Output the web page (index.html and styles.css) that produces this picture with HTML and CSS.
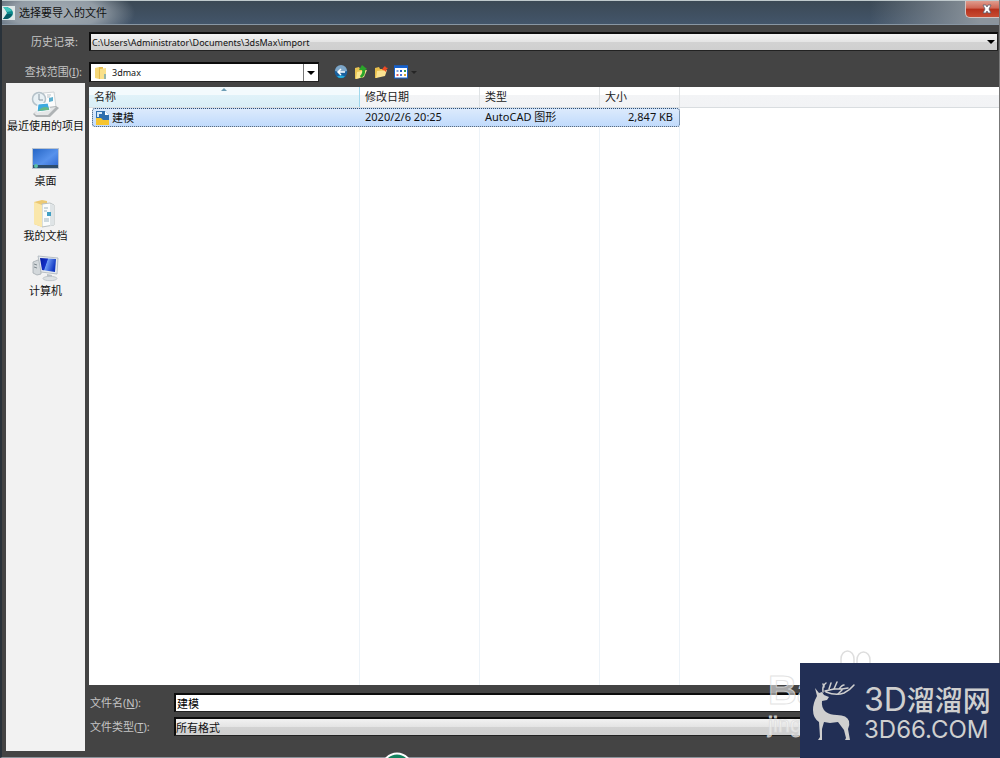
FILE: index.html
```html
<!DOCTYPE html>
<html lang="zh-CN">
<head>
    <meta charset="UTF-8">
    <meta name="viewport" content="width=device-width, initial-scale=1.0">
    <title>选择要导入的文件</title>
    <link rel="stylesheet" href="styles.css">
</head>
<body>
    <div class="dialog">
      <div class="titlebar">
          <svg class="app_icon" viewBox="0 0 15 14">
            <rect width="15" height="14" fill="#dfe9e9"/>
            <path d="M4 1h3q6 2 6 6 0 4-6 6H3l4-6z" fill="#0b8a8c"/>
            <path d="M3 1h4q3 1 5 4L7 6z" fill="#3fc4bd"/>
            <path d="M3 13l4-5h5q-1 4-5 5z" fill="#075c66"/>
          </svg>
          <h1 class="title">选择要导入的文件</h1>
          <button class="close" type="button" aria-label="关闭">
            <svg viewBox="0 0 10 10"><path d="M1 1h3l1 2 1-2h3L7 5l2 4H6L5 7 4 9H1l2-4z" fill="#fff" stroke="#5b5e6c" stroke-width=".8"/></svg>
          </button>
      </div>

      <div class="row history">
          <label class="row_label" for="history">历史记录:</label>
          <div class="select_box">
            <select id="history" class="select"><option>C:\Users\Administrator\Documents\3dsMax\import</option></select>
          </div>
      </div>

      <div class="row lookin">
          <label class="row_label" for="lookin">查找范围(<u>I</u>):</label>
          <div class="select_box folder_box">
            <svg class="folder_icon" viewBox="0 0 14 14">
              <path d="M1 2l4-1v12l-4-1z" fill="#f5d778"/>
              <path d="M5 1h4v12H5z" fill="#e4bb4d"/>
              <path d="M6 3l6-1v11H6z" fill="#f9e08a"/>
              <path d="M10 8h2v5h-2z" fill="#98b6a6"/>
            </svg>
            <select id="lookin" class="select"><option>3dmax</option></select>
          </div>
          <div class="tools">
            <button class="tool" type="button" aria-label="后退">
              <svg viewBox="0 0 14 14">
                <circle cx="7" cy="7" r="6.3" fill="#1a5f9c"/>
                <path d="M1 6a6 6 0 0 1 12 0q-6 2-12 0z" fill="#7da6c8"/>
                <path d="M3 11.500a6 6 0 0 0 8 0q-4-2-8 0z" fill="#25b0e0"/>
                <path d="M11 7H4M7 4L4 7l3 3" fill="none" stroke="#fff" stroke-width="1.500"/>
              </svg>
            </button>
            <button class="tool" type="button" aria-label="向上一级">
              <svg viewBox="0 0 14 14">
                <path d="M1 3l4-1 1 2h4v8l-9 2z" fill="#e9c453"/>
                <path d="M3 7l10-2-3 7-8 2z" fill="#fae792"/>
                <path d="M6 11q3-3 2-6H5l3-5 5 4-2 1q1 5-4 8z" fill="#2aa52a"/>
              </svg>
            </button>
            <button class="tool" type="button" aria-label="新建文件夹">
              <svg viewBox="0 0 14 14">
                <path d="M1 3l4-1 1 2h6v3L2 13H1z" fill="#e9bf4c"/>
                <path d="M3 6l10-1-2 6-9 2z" fill="#fbe391"/>
                <path d="M11 1l1 1.500 2 .5-1.500 1.500L12 7l-1.500-1.500L8 5l1-2z" fill="#f04a23"/>
              </svg>
            </button>
            <button class="tool view" type="button" aria-label="查看菜单">
              <svg viewBox="0 0 14 14">
                <rect x=".5" y="1" width="13" height="12" fill="#fff" stroke="#1762cf"/>
                <path d="M0 .5h14V3H0z" fill="#1762cf"/>
                <path d="M2.500 5h2v2h-2z" fill="#7a9fdc"/><path d="M6 5h2v2H6z" fill="#1c57c2"/><path d="M10 5h2v2h-2z" fill="#2d9c52"/>
                <path d="M2.500 9h2v2h-2z" fill="#d85a5a"/><path d="M6 9h2v2H6z" fill="#4877d8"/><path d="M10 9h2v2h-2z" fill="#d8a32e"/>
              </svg>
            </button>
          </div>
      </div>

      <div class="main">
          <nav class="places">
            <button class="place" type="button">
              <svg viewBox="0 0 30 28">
                <path d="M12 3l11-1 2 15H13z" fill="#fcfcfc" stroke="#d0d4d6"/>
                <path d="M16 5h4M16 7h3" stroke="#b9c3c9"/>
                <path d="M18 8l4-1v4l-4 1z" fill="#5fb0d0"/>
                <circle cx="8" cy="9" r="6.500" fill="#e9f1f5" stroke="#b4c1c9" stroke-width="1.500"/>
                <path d="M8 4v6h4" fill="none" stroke="#8797a2"/>
                <path d="M2 24l6-5 17-3 3 2-9 9H5z" fill="#aeb2b4"/>
                <path d="M3 23l6-4 16-2-8 8H5z" fill="#e4e6e7"/>
                <path d="M7 14l10-1 2 7-13 2z" fill="#3daae0" stroke="#fff"/>
                <path d="M7 21q5-6 11-3v2z" fill="#68b888"/>
              </svg>
              最近使用的项目
            </button>
            <button class="place" type="button">
              <svg viewBox="0 0 30 28">
                <defs><linearGradient id="desk" x2="1" y2="1"><stop stop-color="#2464c4"/><stop offset=".55" stop-color="#5792ec"/><stop offset="1" stop-color="#2a63cf"/></linearGradient></defs>
                <rect x="1.500" y="3.500" width="26" height="20" fill="url(#desk)" stroke="#b9c3cf"/>
                <path d="M2 20h25v3H2z" fill="#2d4d6d"/>
                <circle cx="5" cy="21" r="2" fill="#59bfa6"/>
              </svg>
              桌面
            </button>
            <button class="place" type="button">
              <svg viewBox="0 0 30 28">
                <path d="M3 2l8-2 5 1v24l-5 2-8-3z" fill="#ecc973"/>
                <path d="M11 4l8-1 4 2v20l-12 2z" fill="#fafcfc" stroke="#b8bfc0"/>
                <path d="M19 4l4 1v20l-4 1z" fill="#dfe4e6"/>
                <path d="M13 8h4M13 11h3M13 19h5M13 21h5" stroke="#9eb5c0"/>
                <path d="M16 12h4v4h-4z" fill="#43a0c3"/>
                <path d="M3 2l8 3v22l-8-3z" fill="#fae7ab"/>
              </svg>
              我的文档
            </button>
            <button class="place" type="button">
              <svg viewBox="0 0 30 28">
                <defs><linearGradient id="pc" x2="1" y2=".3"><stop stop-color="#061b9e"/><stop offset=".45" stop-color="#1331c8"/><stop offset=".5" stop-color="#6d9bf5"/><stop offset="1" stop-color="#1238c2"/></linearGradient></defs>
                <path d="M2 7l5-2 3 1v13l-4 1-4-2z" fill="#d3d8db" stroke="#a3abb0" stroke-width=".8"/>
                <path d="M3 9l3 1M3 12l3 1" stroke="#7f898f"/>
                <path d="M7 1l20 2-1 16-16-2z" fill="#e6eaed" stroke="#a9b3ba" stroke-width=".8"/>
                <path d="M9 3l16 1-1 13-13-2z" fill="url(#pc)"/>
                <path d="M16 19l5 1v3h-5z" fill="#b9c0c4"/>
                <ellipse cx="19" cy="23.500" rx="7" ry="2.200" fill="#dde1e3" stroke="#b9bfc3" stroke-width=".8"/>
              </svg>
              计算机
            </button>
          </nav>

          <div class="content">
            <table class="files">
              <thead>
                <tr class="cols">
                  <th class="sorted">名称</th><th>修改日期</th><th>类型</th><th>大小</th>
                </tr>
              </thead>
              <tbody>
                <tr class="cols file">
                  <td class="name">
                    <svg viewBox="0 0 14 14">
                      <path d="M0 0h9l4 4v9H0z" fill="#2f6eae"/>
                      <path d="M1 1h5v2H3v3H1z" fill="#d6e7f6"/>
                      <path d="M9 0l4 4H9z" fill="#fff"/>
                      <path d="M0 7h5l2 2h6v5H0z" fill="#f6c42e"/>
                    </svg>建模
                  </td>
                  <td>2020/2/6 20:25</td><td>AutoCAD 图形</td><td class="size">2,847 KB</td>
                </tr>
              </tbody>
            </table>

            <form class="form">
              <label class="form_label" for="filename">文件名(<u>N</u>):</label>
              <input id="filename" class="input" type="text" value="建模">
              <label class="form_label" for="filetype">文件类型(<u>T</u>):</label>
              <div class="select_box">
                <select id="filetype" class="select"><option>所有格式</option></select>
              </div>
            </form>
          </div>
      </div>
    </div>

    <!-- overlays -->
    <svg class="badge" viewBox="0 0 32 6"><circle cx="16" cy="16" r="14.500" fill="#15835f" stroke="#fff" stroke-width="2"/></svg>
    <div class="baidu">
      <svg class="paw" viewBox="0 0 32 16"><path d="M1 16V9a6.500 8 0 0 1 13 0v7M17 16V10a6.500 8 0 0 1 13 0v6" fill="none" stroke="#dedede" stroke-width="1.500"/></svg>
      <p class="baidu_name">Ba</p>
      <p class="baidu_sub">jing</p>
    </div>
    <div class="logo">
      <svg class="deer" viewBox="0 0 44 60">
        <path d="M3 7l4 5 3-1 2 3 5 2-2 3-5 1q-1 7 4 11 4 3 11 3 10 0 12 6 1 4-1 8l2 11h-5l1-2-2-8-6-8-8 1-6-1-2 7v11H6l2-3-1-15Q1 37 1 29q0-7 4-14z" fill="#cfcfcf"/>
        <g fill="none" stroke="#cfcfcf" stroke-width="1.500" stroke-linecap="round">
          <path d="M11 11q-1-6 3-9M13 10l9-2M14 11q10 4 18 1 6-3 10-8"/>
          <path d="M17 8l2-6M22 8l3-7M27 8q3-4 5-4M22 8h8l6-1M12 6l-1-3M26 13l4-4"/>
        </g>
      </svg>
      <div class="logo_text">
        <p class="logo_name"><span>3D</span>溜溜网</p>
        <p class="logo_url">3D66.COM</p>
      </div>
    </div>
</body>
</html>
```
FILE: styles.css
```css
*{
  box-sizing: border-box;
}
body{
  margin: 0;
  font-family: "Noto Sans", "Noto Sans CJK SC", sans-serif;
  font-size: 11px;
  line-height: 16px;
  color: #111;
}
p, h1{
  margin: 0;
}
svg{
  display: block;
  flex: none;
}
button{
  border: 0;
  padding: 0;
  background: none;
  font: inherit;
  color: inherit;
}
.dialog{
  height: 100vh;
  display: flex;
  flex-direction: column;
  background-color: #444;
  border-right: 1px solid #777;
  border-bottom: 1px solid #8b939b;
  border-left: 2px solid #29323a;
  overflow: hidden;
}

/* title bar */
.titlebar{
  flex: none;
  height: 25px;
  margin-left: -2px;
  margin-right: -1px;
  display: flex;
  align-items: center;
  gap: 4px;
  border-top: 1px solid #bfc9cc;
  border-bottom: 1px solid #8896a3;
  background: radial-gradient(ellipse 80px 30px at 55px 12px, #a3acb4, #929ca5 55%, transparent),
    linear-gradient(to right, transparent 87%, #8b949c 98%),
    linear-gradient(#3b4955, #43556a);
}
.app_icon{
  width: 15px;
  height: 14px;
}
.title{
  flex: 1;
  font-size: 11px;
  font-weight: normal;
}
.close{
  align-self: flex-start;
  width: 35px;
  height: 17px;
  padding-left: 8px;
  display: flex;
  align-items: center;
  justify-content: center;
  border: 1px solid #d5c3c1;
  border-top: 0;
  border-right: 0;
  border-bottom-left-radius: 5px;
  background: linear-gradient(#df9c8e, #cf6553 45%, #b5301c 50%, #c84c32);
}
.close svg{
  width: 10px;
  height: 10px;
}

/* top rows */
.row{
  flex: none;
  display: flex;
  align-items: center;
}
.row_label{
  width: 87px;
  padding-right: 11px;
  text-align: right;
  color: #c4c4c4;
}
.history{
  padding: 7px 1px 0 0;
}
.lookin{
  padding: 11px 0 1px;
}
.lookin .row_label{
  padding-right: 7px;
}
.select_box{
  position: relative;
  flex: 1;
  height: 19px;
  display: flex;
  align-items: center;
  border: 1px solid #222;
  border-top: 2px solid #0c0c0c;
  border-left: 2px solid #0c0c0c;
  background: linear-gradient(#f2f2f2, #e4e4e4 50%, #d2d2d2 52%, #cfcfcf);
}
.select_box::after{
  content: "";
  position: absolute;
  right: 2px;
  top: 6px;
  border: 4px solid transparent;
  border-top-color: #000;
  border-bottom: 0;
}
.select{
  width: 100%;
  height: 16px;
  padding: 0 1px;
  border: 0;
  appearance: none;
  background: none;
  font-family: "Noto Sans", "Noto Sans CJK SC", sans-serif;
  font-size: 9px;
  color: #111;
}
.folder_box{
  flex: none;
  width: 230px;
  height: 20px;
  padding-left: 3px;
  gap: 3px;
  background: linear-gradient(#777, #777) right 14px top 0 / 1px 100% no-repeat #fff;
}
.folder_box::after{
  right: 3px;
  top: 7px;
}
.folder_icon{
  width: 14px;
  height: 14px;
}
.tools{
  display: flex;
  gap: 6px;
  padding-left: 15px;
}
.tool svg{
  width: 14px;
  height: 14px;
}
.view{
  display: flex;
  align-items: center;
  gap: 3px;
}
.view::after{
  content: "";
  border: 3px solid transparent;
  border-top-color: #252525;
  border-bottom: 0;
}

/* places + file list */
.main{
  flex: 1;
  min-height: 0;
  display: flex;
  gap: 4px;
  padding-left: 4px;
}
.places{
  flex: none;
  width: 79px;
  margin-bottom: 6px;
  padding-top: 7px;
  display: flex;
  flex-direction: column;
  gap: 11px;
  background-color: #f2f2f2;
}
.place{
  display: flex;
  flex-direction: column;
  align-items: center;
  white-space: nowrap;
}
.place svg{
  width: 30px;
  height: 28px;
}
.content{
  flex: 1;
  padding-top: 4px;
  display: flex;
  flex-direction: column;
}
.files{
  flex: 1;
  display: flex;
  flex-direction: column;
  background-color: #fff;
}
.cols{
  display: grid;
  grid-template-columns: 271px 120px 120px 80px;
}
.files thead{
  display: block;
  border-bottom: 1px solid #d9dde0;
  background: linear-gradient(#fff 40%, #f3f4f6 42%, #f2f3f5);
}
.files th{
  height: 20px;
  padding: 2px 5px;
  border-right: 1px solid #e0e3e5;
  text-align: left;
  font-weight: normal;
  color: #222;
}
.files .sorted{
  position: relative;
  border-right-color: #9fd8ec;
  background: linear-gradient(#f3fafd 40%, #e0f2f9 42%, #d9eef6);
}
.sorted::after{
  content: "";
  position: absolute;
  left: 132px;
  top: 1px;
  border: 3px solid transparent;
  border-bottom-color: #6d9db5;
  border-top: 0;
}
.files tbody{
  flex: 1;
  display: block;
  padding: 0 0 0 3px;
  /* column lines */
  background:
    linear-gradient(#edf3f8, #edf3f8) 270px 0 / 1px 100% no-repeat,
    linear-gradient(#edf3f8, #edf3f8) 390px 0 / 1px 100% no-repeat,
    linear-gradient(#edf3f8, #edf3f8) 510px 0 / 1px 100% no-repeat,
    linear-gradient(#edf3f8, #edf3f8) 590px 0 / 1px 100% no-repeat;
}
.file{
  width: 588px;
  height: 19px;
  grid-template-columns: 267px 120px 120px 79px;
  border: 1px dotted #34506e;
  border-radius: 3px;
  background: linear-gradient(#dceafc, #c1dbfc);
}
.files td{
  padding: 0 5px;
}
.files .name{
  display: flex;
  align-items: center;
  gap: 2px;
  padding-left: 3px;
}
.name svg{
  width: 14px;
  height: 14px;
}
.files .size{
  padding-right: 6px;
  text-align: right;
}

/* file name, file type */
.form{
  flex: none;
  display: grid;
  grid-template-columns: 85px 1fr;
  gap: 5px 0;
  align-items: center;
  padding: 8px 0 21px;
}
.form_label{
  padding-left: 1px;
  color: #c4c4c4;
}
.input{
  height: 19px;
  padding: 0 1px;
  border: 1px solid #222;
  border-top: 2px solid #0c0c0c;
  border-left: 2px solid #0c0c0c;
  border-radius: 0;
  font: inherit;
  background-color: #fff;
}
.form .select{
  font-size: 11px;
  padding: 0;
}

/* overlays */
.badge{
  position: absolute;
  left: 381px;
  bottom: 0;
  width: 32px;
  height: 6px;
}
.baidu{
  position: absolute;
  right: 128px;
  bottom: 22px;
  width: 104px;
  height: 86px;
  font-family: "Liberation Sans", sans-serif;
  color: rgba(255, 255, 255, .55);
  -webkit-text-stroke: 1px rgba(220, 220, 220, .8);
}
.paw{
  width: 32px;
  height: 16px;
  margin-left: auto;
}
.baidu_name{
  font-size: 40px;
  line-height: 48px;
  font-weight: bold;
}
.baidu_sub{
  font-size: 22px;
  line-height: 22px;
}
.logo{
  position: absolute;
  right: 0;
  bottom: 0;
  width: 200px;
  height: 95px;
  padding: 18px 0 0 12px;
  display: flex;
  gap: 8px;
  background-color: #222f55;
  color: #cfcfcf;
}
.deer{
  width: 44px;
  height: 60px;
}
.logo_text{
  font-family: "Inter", "Noto Sans CJK SC", sans-serif;
  white-space: nowrap;
}
.logo_name{
  font-size: 28px;
  line-height: 38px;
  font-weight: 500;
}
.logo_name span{
  font-size: 32px;
  font-weight: 400;
}
.logo_url{
  font-size: 24px;
  line-height: 20px;
  font-weight: 400;
}
```
